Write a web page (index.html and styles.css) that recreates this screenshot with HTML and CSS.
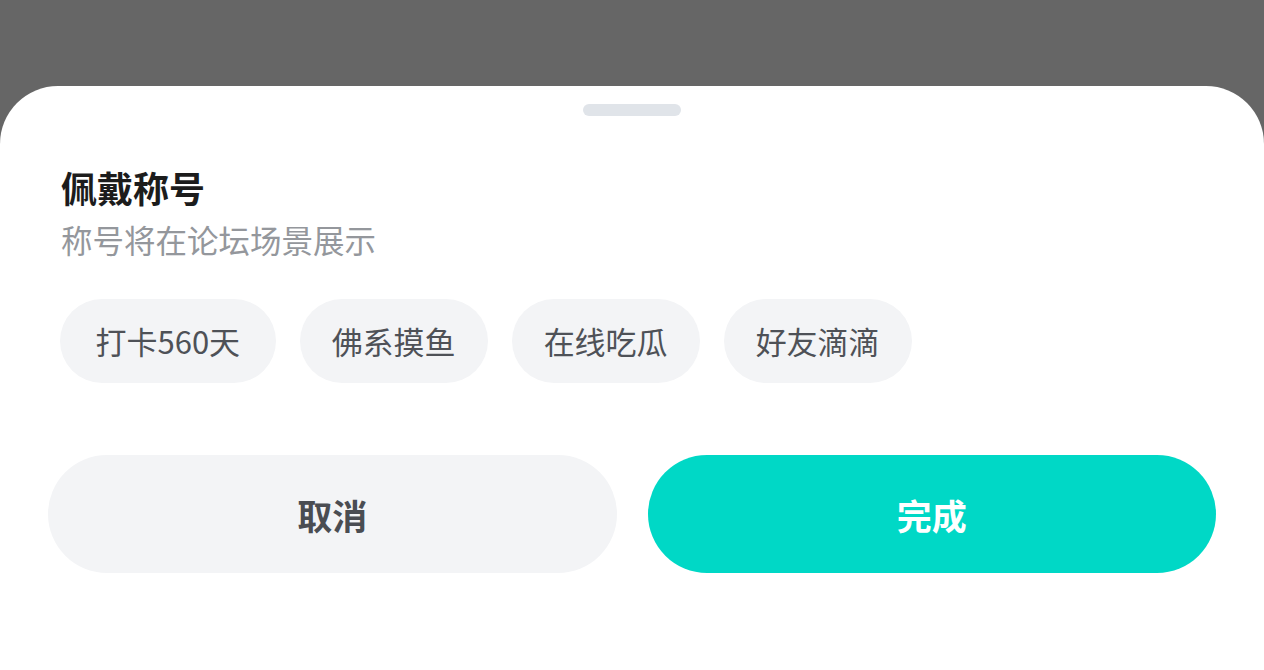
FILE: index.html
```html
<!DOCTYPE html>
<html lang="zh-CN">
<head>
    <meta charset="UTF-8">
    <meta name="viewport" content="width=device-width, initial-scale=1.0">
    <title>佩戴称号</title>
    <link rel="stylesheet" href="styles.css">
</head>
<body>
    <div class="mask">
        <div class="sheet">
            <div class="handle"></div>
            <div class="head">
                <h2 class="title">佩戴称号</h2>
                <p class="desc">称号将在论坛场景展示</p>
            </div>
            <div class="tags">
                <span class="tag wide">打卡560天</span>
                <span class="tag">佛系摸鱼</span>
                <span class="tag">在线吃瓜</span>
                <span class="tag">好友滴滴</span>
            </div>
            <div class="actions">
                <button class="btn cancel">取消</button>
                <button class="btn confirm">完成</button>
            </div>
        </div>
    </div>
</body>
</html>
```

FILE: styles.css
```css
html, body {
    margin: 0;
    padding: 0;
    height: 100%;
}

body {
    font-family: "Noto Sans CJK SC", "Noto Sans", sans-serif;
    background-color: #666666;
}

.mask {
    height: 100%;
    display: flex;
    flex-direction: column;
    justify-content: flex-end;
}

.sheet {
    height: 584px;
    background-color: #ffffff;
    border-radius: 58px 58px 0 0;
    padding: 18px 48px 0;
    box-sizing: border-box;
}

.handle {
    width: 98px;
    height: 12px;
    border-radius: 6px;
    background-color: #e0e4e9;
    margin: 0 auto;
}

.head {
    padding: 49px 12px 0 13px;
}

.title {
    margin: 0;
    font-size: 36px;
    line-height: 44px;
    font-weight: 700;
    color: #1c1c1c;
}

.desc {
    margin: 10px 0 0;
    font-size: 31.5px;
    line-height: 40px;
    color: #94979c;
}

.tags {
    display: flex;
    gap: 24px;
    padding: 40px 12px 0;
}

.tag {
    height: 84px;
    line-height: 84px;
    padding: 0 32px;
    border-radius: 42px;
    background-color: #f3f4f6;
    font-size: 31px;
    color: #4e5157;
}

.tag.wide {
    padding: 0 35.5px;
}

.actions {
    display: flex;
    gap: 31px;
    padding-top: 72px;
}

button {
    font-family: inherit;
    border: none;
    cursor: pointer;
}

.btn {
    flex: 1;
    height: 118px;
    border-radius: 59px;
    font-size: 35px;
    font-weight: 700;
}

.btn.cancel {
    background-color: #f3f4f6;
    color: #4a4d52;
}

.btn.confirm {
    background-color: #00d8c6;
    color: #ffffff;
}
```
